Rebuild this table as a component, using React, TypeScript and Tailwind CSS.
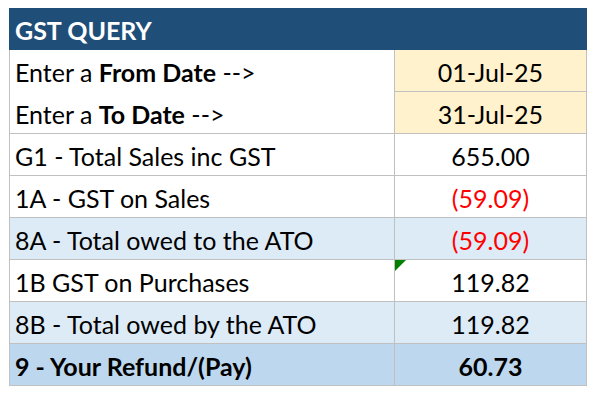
import React from "react";

interface Row {
  label: React.ReactNode;
  value: string;
  bg: string;
  valueBg?: string;
  red?: boolean;
  bold?: boolean;
  noLine?: boolean;
  flag?: boolean;
}

const rows: Row[] = [
  {
    label: (
      <>
        Enter a <b>From Date</b> --&gt;
      </>
    ),
    value: "01-Jul-25",
    bg: "bg-white",
    valueBg: "bg-[#fff2cc]",
    noLine: true,
  },
  {
    label: (
      <>
        Enter a <b>To Date</b> --&gt;
      </>
    ),
    value: "31-Jul-25",
    bg: "bg-white",
    valueBg: "bg-[#fff2cc]",
  },
  { label: "G1 - Total Sales inc GST", value: "655.00", bg: "bg-white" },
  { label: "1A - GST on Sales", value: "(59.09)", bg: "bg-white", red: true },
  { label: "8A - Total owed to the ATO", value: "(59.09)", bg: "bg-[#ddebf7]", red: true },
  { label: "1B GST on Purchases", value: "119.82", bg: "bg-white", flag: true },
  { label: "8B - Total owed by the ATO", value: "119.82", bg: "bg-[#ddebf7]" },
  { label: "9 - Your Refund/(Pay)", value: "60.73", bg: "bg-[#bdd7ee]", bold: true },
];

export default function App() {
  return (
    <div className="w-[597px] h-[395px] bg-white pt-[8px] pl-[9px] font-['Lato',sans-serif] text-[25px] leading-none text-black">
      <div className="w-[578px]">
        <div className="h-[42px] bg-[#1f4e78] text-white font-bold flex items-center pl-[6px] pt-[3px]">
          GST QUERY
        </div>
        {rows.map((r, i) => (
          <div key={i} className={`grid grid-cols-[386px_192px] h-[42px] ${r.bg} ${r.bold ? "font-bold" : ""}`}>
            <div
              className={`flex items-center pl-[5px] pt-[3px] border-l border-r border-[#c0c0c0] ${
                r.noLine ? "" : "border-b"
              }`}
            >
              <span>{r.label}</span>
            </div>
            <div
              className={`relative flex items-center justify-center pt-[3px] border-r border-b border-[#c0c0c0] ${r.valueBg ?? ""} ${
                r.red ? "text-[#ff0000]" : ""
              }`}
            >
              {r.flag && (
                <div className="absolute left-0 top-0 w-0 h-0 border-t-[11px] border-r-[11px] border-t-[#008000] border-r-transparent" />
              )}
              {r.value}
            </div>
          </div>
        ))}
      </div>
    </div>
  );
}
